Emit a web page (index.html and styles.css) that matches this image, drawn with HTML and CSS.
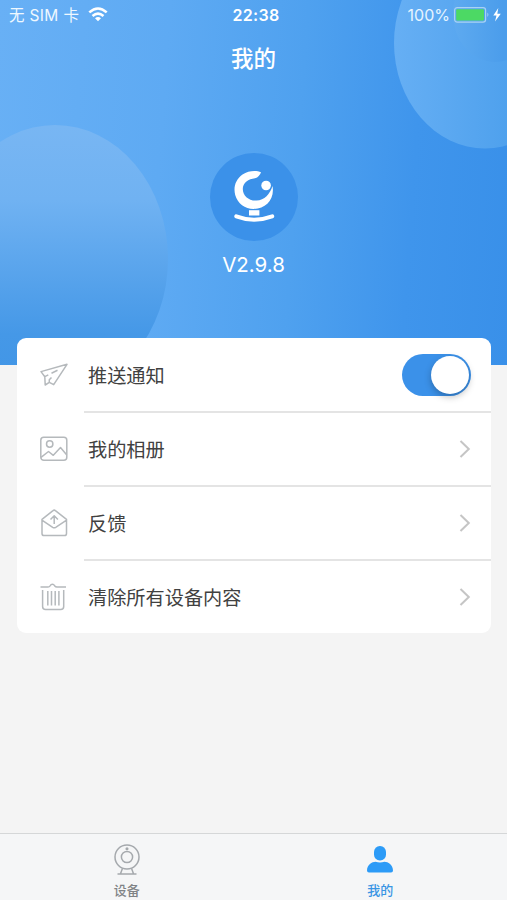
FILE: index.html
```html
<!DOCTYPE html>
<html lang="zh-CN">
<head>
<meta charset="utf-8">
<title>我的</title>
<link rel="stylesheet" href="styles.css">
</head>
<body>
<div class="app">
  <header class="hero">
    <svg class="hero-art" viewBox="0 0 507 365" aria-hidden="true">
      <defs>
        <linearGradient id="left" x1="0" y1="0" x2="0" y2="1">
          <stop offset="0" stop-color="#78b6f3"/><stop offset=".28" stop-color="#70b2f2"/><stop offset=".78" stop-color="#4598e7"/><stop offset="1" stop-color="#4095e6"/>
        </linearGradient>
        <linearGradient id="right" x1="0" y1="0" x2="1" y2="0">
          <stop offset="0" stop-color="#66aff4"/><stop offset=".62" stop-color="#4fa1ed"/><stop offset="1" stop-color="#4096e8"/>
        </linearGradient>
        <linearGradient id="small" x1="0" y1="0" x2="1" y2="0">
          <stop offset="0" stop-color="#5eaaf0"/><stop offset=".6" stop-color="#4b9deb"/>
        </linearGradient>
      </defs>
      <ellipse cx="55" cy="259" rx="113" ry="134" fill="url(#left)"/>
      <ellipse cx="485" cy="43" rx="91" ry="105.500" fill="url(#right)"/>
      <ellipse cx="495" cy="14" rx="42" ry="48" fill="url(#small)"/>
    </svg>
    <div class="status">
      <div class="carrier"><span>无 SIM 卡</span>
        <svg width="20" height="15" viewBox="0 0 20 15" fill="none" stroke="#fff" stroke-width="2.600"><path d="M1.300 5.400Q10-2.400 18.700 5.400M4.500 8.900Q10 4.200 15.500 8.900"/><path d="M7 11.200Q10 8.900 13 11.200L10 14.300Z" fill="#fff" stroke="none"/></svg>
      </div>
      <time>22:38</time>
      <div class="power"><span>100%</span>
        <svg width="50" height="16" viewBox="0 0 50 16"><rect x=".6" y=".6" width="31" height="14.600" rx="2.600" fill="none" stroke="#a9d2f4" stroke-width="1.200"/><rect x="2.200" y="2.200" width="27.800" height="11.400" rx="1" fill="#4cd964"/><path d="M33.400 5.600q2 2.200 0 4.400z" fill="#a9d2f4"/><path d="M44.300 1L39.300 8.600h3.200L41 14.600 46.800 6.800h-3.500z" fill="#fff"/></svg>
      </div>
    </div>
    <h1>我的</h1>
    <div class="logo">
      <svg width="88" height="88" viewBox="0 0 88 88" fill="#fff">
        <path d="M51 19.300C46.500 17.200 38.500 17.400 32.500 21.600C25.500 26.600 23.200 34.500 25.200 42C27.600 50.500 35 56 43.500 56C55.500 56 65 46.500 62.500 33C60 41 54.500 47.200 46.500 47.600C38.500 48 32.800 42.500 32.800 36C32.800 29.500 38.500 26 45 25.300Q49.500 24 51 19.300Z"/>
        <circle cx="56.100" cy="32.500" r="4.800"/>
        <path d="M39 57.200h10.400v5.300H39z"/>
        <path d="M26.300 63.300Q44 70 62.200 63.300" fill="none" stroke="#fff" stroke-width="4" stroke-linecap="round"/>
      </svg>
    </div>
    <p class="version">V2.9.8</p>
  </header>
  <main class="card">
    <div class="row">
      <svg class="icon" viewBox="0 0 30 30"><path d="M28 4.300L2 11.600 5.800 16.700 6.200 25 10.300 22.300 14.700 24.600ZM5.800 16.700L9.300 14.800M12.500 13.200L18.500 10.300M10.300 22.300L10.300 19.800 12.500 17.500"/></svg>
      <span class="label">推送通知</span><span class="toggle"></span>
    </div>
    <div class="row">
      <svg class="icon" viewBox="0 0 30 30"><rect x="1.800" y="3.300" width="26" height="23" rx="3"/><circle cx="10.700" cy="10" r="3.200"/><path d="M2 23.400L9.500 17.500 14.300 21.300 21.500 13.500 27.600 20.800"/></svg>
      <span class="label">我的相册</span><svg class="chevron" viewBox="0 0 12 20"><path d="M1.500 2L9.800 10 1.500 18"/></svg>
    </div>
    <div class="row">
      <svg class="icon" viewBox="0 0 30 30"><path d="M3 11.300L14 2.600Q15.200 1.600 16.400 2.600L27.500 11.300V25.400Q27.500 27.500 25.400 27.500H5.100Q3 27.500 3 25.400ZM3.300 12.300L13.700 19.300Q15.200 20.200 16.700 19.300L27.200 12.300M15.200 16V8M11.500 11.500L15.200 7.800 18.900 11.500"/></svg>
      <span class="label">反馈</span><svg class="chevron" viewBox="0 0 12 20"><path d="M1.500 2L9.800 10 1.500 18"/></svg>
    </div>
    <div class="row">
      <svg class="icon" viewBox="0 0 30 30"><path d="M1.500 5H9Q10.500 5 11 4Q12 2.200 13.400 2.200Q14.800 2.200 15.800 4Q16.500 5 18 5H27M3.600 8V24.500Q3.600 27.500 6.600 27.500H21.700Q24.700 27.500 24.700 24.500V8M8.800 9V23.500M12.500 9V23.500M16.200 9V23.500M19.900 9V23.500"/></svg>
      <span class="label">清除所有设备内容</span><svg class="chevron" viewBox="0 0 12 20"><path d="M1.500 2L9.800 10 1.500 18"/></svg>
    </div>
  </main>
  <nav class="tabs">
    <div class="tab">
      <svg width="30" height="34" viewBox="0 0 30 34" fill="none" stroke="#a5a9ad" stroke-width="1.500"><circle cx="15" cy="14" r="12"/><circle cx="15" cy="14" r="5.600"/><circle cx="15" cy="5.700" r=".8"/><path d="M10.500 25.200L8.600 30.500M19.500 25.200L21.400 30.500M5.500 31H24.500"/></svg>
      <span>设备</span>
    </div>
    <div class="tab active">
      <svg width="30" height="34" viewBox="0 0 30 34" fill="#2c9bf7"><rect x="9" y="3" width="12" height="14.500" rx="5.800"/><path d="M2 27.500C2 21.500 7 18.700 10.500 18.700Q15 20.300 19.500 18.700C23 18.700 28 21.500 28 27.500Q28 29.500 26 29.500H4Q2 29.500 2 27.500Z"/></svg>
      <span>我的</span>
    </div>
  </nav>
</div>
</body>
</html>
```
FILE: styles.css
```css
* { box-sizing: border-box; }
body { margin: 0; background: #f4f4f4; font-family: Inter, "Noto Sans CJK SC", sans-serif; }
.app { height: 900px; display: flex; flex-direction: column; }
.hero {
  position: relative;
  height: 365px;
  flex: none;
  display: flex;
  flex-direction: column;
  align-items: center;
  color: #fff;
  background: linear-gradient(94deg, #68b0f5 0%, #5eaaf3 32%, #4fa1ef 58%, #3f95ec 80%, #3990e9 100%);
}
.hero > * { position: relative; }
.hero .hero-art { position: absolute; left: 0; top: 0; width: 100%; height: 100%; }
.status {
  width: 100%;
  height: 30px;
  padding: 0 7px 0 9px;
  display: grid;
  grid-template-columns: 1fr auto 1fr;
  align-items: center;
  font-size: 16px;
  line-height: 30px;
}
.carrier, .power { display: flex; align-items: center; }
.carrier { gap: 9px; color: #eff8ff; }
.carrier span { font-size: 15.5px; letter-spacing: .35px; line-height: 28px; padding-top: 2px; }
.carrier svg { margin-top: -2px; }
.status time { font-weight: 600; letter-spacing: .35px; margin-left: 3px; }
.power { justify-content: flex-end; gap: 4px; color: #e6f4ff; margin-right: -4px; }
h1 { margin: 12px 0 0; font-size: 22.5px; line-height: 34px; font-weight: 500; }
.logo { width: 88px; height: 88px; margin-top: 77px; border-radius: 50%; background: #3b91e9; }
.logo svg { display: block; }
.version { margin: 9px 0 0; font-size: 20.5px; line-height: 30px; }
.card {
  position: relative;
  flex: none;
  margin: -27px 16px 0 17px;
  height: 295px;
  border-radius: 9px;
  background: #fff;
}
.row { height: 74px; padding: 0 20px 0 22px; display: flex; align-items: center; position: relative; }
.row + .row::before { content: ""; position: absolute; left: 67px; right: 0; top: -1px; height: 1.5px; background: #e4e4e4; }
.icon { width: 30px; height: 30px; fill: none; stroke: #b5b9bc; stroke-width: 1.5; stroke-linejoin: round; }
.label { flex: 1; margin-left: 19px; padding-top: 2px; font-size: 19.2px; line-height: 28px; color: #414141; }
.chevron { width: 12px; height: 20px; fill: none; stroke: #c5c5c5; stroke-width: 2; }
.toggle { width: 69px; height: 42px; border-radius: 21px; background: #3b91e9; display: flex; justify-content: flex-end; padding: 2px; }
.toggle::after { content: ""; width: 38px; height: 38px; border-radius: 50%; background: #fff; box-shadow: 0 3px 7px rgba(0, 0, 0, .25); }
.tabs { margin-top: auto; height: 67px; flex: none; display: flex; border-top: 1.5px solid #d5d7d8; background: #f5f6f7; }
.tab { flex: 1; display: flex; flex-direction: column; align-items: center; padding-top: 9px; font-size: 13px; line-height: 18px; font-weight: 500; color: #808386; }
.tab span { margin-top: 4px; }
.tab.active { color: #3995e4; }
```
